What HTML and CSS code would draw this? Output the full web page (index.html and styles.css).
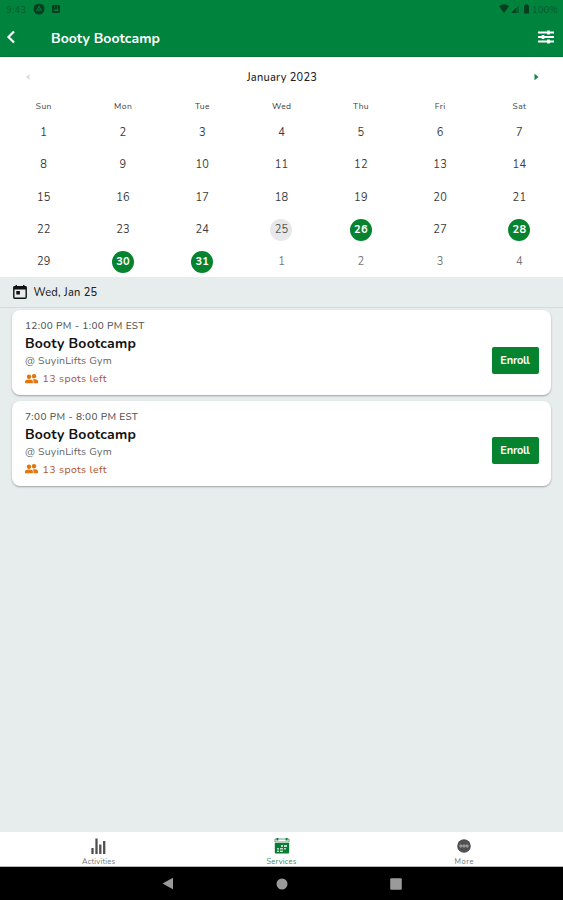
FILE: index.html
```
<!DOCTYPE html>
<html lang="en">
<head>
<meta charset="utf-8">
<title>Booty Bootcamp</title>
<link rel="stylesheet" href="styles.css">
</head>
<body>
<div class="app">
  <header class="top">
    <div class="status">
      <span class="clock">9:43</span>
      <svg class="status-app" width="12" height="12" viewBox="0 0 12 12"><circle cx="6" cy="6" r="5.5"/><path d="M3.500 8 6 3.300 8.500 8M4.800 7h2.400" fill="none" stroke="#00843d" stroke-width="1"/></svg>
      <svg class="status-pic" width="8" height="8" viewBox="0 0 8 8"><rect width="8" height="8" rx="1"/><path d="M1.500 6 3 4l1 1 1.500-2 1 3zM2 1.500h1v1H2zM5 1.500h1v1H5z" fill="#00843d"/></svg>
      <span class="grow"></span>
      <svg width="33" height="10" viewBox="0 0 33 10"><path d="M0 2.200Q5-1.500 10 2.200L5 9z"/><path d="M12 9l8-8v8z" opacity=".45"/><path d="M12 9l5-5v5z"/><path d="M25 1.500h1V.5h3v1h1V9.500h-5z"/></svg>
      <span class="battery">100%</span>
    </div>
    <div class="bar">
      <svg width="10" height="14" viewBox="0 0 10 14"><path d="M8 1.500 2.500 7 8 12.500" fill="none" stroke="#fff" stroke-width="2.200"/></svg>
      <h1>Booty Bootcamp</h1>
      <svg width="16" height="14" viewBox="0 0 16 14" stroke="#fff" stroke-width="1.800"><path d="M0 2.500h16M0 7h16M0 11.500h16"/><path d="M10.500 .5v4M5 5v4M10.500 9.500v4" stroke-width="2.600"/></svg>
    </div>
  </header>

  <section class="calendar">
    <div class="month">
      <svg width="5" height="8" viewBox="0 0 5 8"><path d="M4.500 1v6L.8 4z" fill="#dce0e0"/></svg>
      <span>January 2023</span>
      <svg width="5" height="8" viewBox="0 0 5 8"><path d="M.5.800v6.400L4.500 4z" fill="#128344"/></svg>
    </div>
    <div class="week names"><span>Sun</span><span>Mon</span><span>Tue</span><span>Wed</span><span>Thu</span><span>Fri</span><span>Sat</span></div>
    <div class="week"><span>1</span><span>2</span><span>3</span><span>4</span><span>5</span><span>6</span><span>7</span></div>
    <div class="week"><span>8</span><span>9</span><span>10</span><span>11</span><span>12</span><span>13</span><span>14</span></div>
    <div class="week"><span>15</span><span>16</span><span>17</span><span>18</span><span>19</span><span>20</span><span>21</span></div>
    <div class="week"><span>22</span><span>23</span><span>24</span><span class="today">25</span><span class="open">26</span><span>27</span><span class="open">28</span></div>
    <div class="week"><span>29</span><span class="open">30</span><span class="open">31</span><span class="next">1</span><span class="next">2</span><span class="next">3</span><span class="next">4</span></div>
  </section>

  <div class="date">
    <svg width="14" height="14" viewBox="0 0 14 14"><rect x=".8" y="1.800" width="12.400" height="11.400" rx="1" fill="none" stroke="#111" stroke-width="1.400"/><path d="M.5 1.500h13v3H.5zM2.500 0H4v2H2.500zM10 0h1.500v2H10zM3.300 6h3.600v3.600H3.300z" fill="#111"/></svg>
    <span>Wed, Jan 25</span>
  </div>

  <main class="list">
    <article class="card">
      <div>
        <p class="time">12:00 PM - 1:00 PM EST</p>
        <h2>Booty Bootcamp</h2>
        <p class="place">@ SuyinLifts Gym</p>
        <p class="spots"><svg width="13" height="10" viewBox="0 0 13 10"><circle cx="4" cy="2.700" r="2.200"/><circle cx="9" cy="2.300" r="2.200"/><path d="M0 9.300V7.500Q0 5.500 4 5.500T7.900 7.500v1.800zM8.500 9.300V7.200q0-1-1-1.700Q13 4.600 13 7.500v1.800z"/></svg><span>13 spots left</span></p>
      </div>
      <button>Enroll</button>
    </article>
    <article class="card">
      <div>
        <p class="time">7:00 PM - 8:00 PM EST</p>
        <h2>Booty Bootcamp</h2>
        <p class="place">@ SuyinLifts Gym</p>
        <p class="spots"><svg width="13" height="10" viewBox="0 0 13 10"><circle cx="4" cy="2.700" r="2.200"/><circle cx="9" cy="2.300" r="2.200"/><path d="M0 9.300V7.500Q0 5.500 4 5.500T7.900 7.500v1.800zM8.500 9.300V7.200q0-1-1-1.700Q13 4.600 13 7.500v1.800z"/></svg><span>13 spots left</span></p>
      </div>
      <button>Enroll</button>
    </article>
  </main>

  <nav class="tabs">
    <a><svg width="15" height="16" viewBox="0 0 15 16"><path d="M1.500 16v-6M5.500 16V.5M9.300 16V6.500M13.200 16V3" stroke="#505050" stroke-width="2.300"/></svg><span>Activities</span></a>
    <a class="active"><svg width="16" height="16" viewBox="0 0 16 16"><path d="M1 1h14v3H1z" fill="#fff" stroke="#43875b" stroke-width=".8"/><path d="M.8 5h14.400v9.500q0 1-1 1H1.800q-1 0-1-1zM2.500 0h1.800v2.500H2.500zM11.700 0h1.800v2.500h-1.800z" fill="#087b35"/><path d="M7 7h2v2H7zM10 7h3v2h-3zM3 10h2v1.500H3zM6 10h3v1.500H6zM10 10h2v1.500h-2zM3 12.500h2V14H3zM6 12.500h3V14H6z" fill="#b9dec5"/></svg><span>Services</span></a>
    <a><svg width="14" height="16" viewBox="0 0 14 16"><circle cx="7" cy="8" r="6.800" fill="#505050"/><g fill="#777" stroke="#bbb" stroke-width=".7"><circle cx="3.900" cy="8" r="1.200"/><circle cx="7" cy="8" r="1.200"/><circle cx="10.100" cy="8" r="1.200"/></g></svg><span>More</span></a>
  </nav>
  <div class="system">
    <svg width="12" height="13" viewBox="0 0 12 13"><path d="M11 .8v11.400L.5 6.500z"/></svg>
    <svg width="12" height="12" viewBox="0 0 12 12"><circle cx="6" cy="6" r="5.500"/></svg>
    <svg width="12" height="12" viewBox="0 0 12 12"><rect x=".2" y=".2" width="11.600" height="11.600" rx="1"/></svg>
  </div>
</div>
</body>
</html>
```
FILE: styles.css
```
* { box-sizing: border-box; }
body { margin: 0; font-family: Nunito, "Open Sans", sans-serif; color: #222; }
h1, h2, p { margin: 0; }
svg { display: block; flex: none; }
.app { width: 563px; height: 900px; display: flex; flex-direction: column; background: #e7eded; }

.top { height: 57px; background: #00843d; border-bottom: 1px solid #067332; }
.status { height: 18px; display: flex; align-items: center; padding: 0 6px; font-size: 9.500px; color: #075b2c; fill: #063e20; }
.clock { width: 27px; letter-spacing: .2px; }
.status-pic { margin-left: 7px; }
.grow { flex: 1; }
.battery { width: 25px; white-space: nowrap; }
.bar { height: 39px; display: flex; align-items: center; padding: 0 9px 1px 6px; }
h1 { flex: 1; margin-left: 35px; padding-top: 3px; font-size: 14px; line-height: 20px; font-weight: 700; color: #fff; letter-spacing: .05px; }

.calendar { height: 220px; background: #fff; padding: 10px 4px 0; }
.month { height: 20px; display: flex; align-items: center; justify-content: space-between; padding: 0 20px 0 21px; font-size: 11px; font-weight: 500; letter-spacing: .25px; }
.week { height: 32.400px; display: grid; grid-template-columns: repeat(7, 1fr); align-items: center; justify-items: center; font-size: 11px; letter-spacing: .3px; color: #3c3c3c; }
.week span { width: 22px; height: 22px; line-height: 22px; padding-left: .3px; text-align: center; border-radius: 50%; }
.week.names { height: 29.600px; padding-top: 8px; font-size: 8.500px; letter-spacing: .4px; }
.week.names span { width: auto; padding-left: .4px; }
.week .next { color: #777; }
.week .today { background: #e6e8e9; color: #555; }
.week .open { background: #06832f; color: #fff; font-weight: 700; }

.date { height: 31px; display: flex; align-items: center; gap: 6.500px; padding: 0 13px; font-size: 11px; font-weight: 500; letter-spacing: .25px; border-bottom: 1px solid #d5dadb; }
.list { flex: 1; padding: 2px 12px; }
.card { height: 85px; margin-bottom: 5.500px; display: flex; justify-content: space-between; align-items: flex-start; padding: 8px 12.500px 0 13px; background: #fff; border-radius: 8px; box-shadow: 0 1px 2px #9ba2a5; }
.time { font-size: 10px; line-height: 17px; color: #555; font-weight: 500; letter-spacing: .36px; }
h2 { font-size: 14px; line-height: 18px; font-weight: 700; color: #111; letter-spacing: .2px; }
.place { font-size: 10.500px; line-height: 16px; color: #666; letter-spacing: .2px; }
.spots { display: flex; align-items: center; gap: 4.500px; font-size: 10.500px; line-height: 19px; color: #af5127; fill: #df7813; letter-spacing: .38px; }
button { width: 47px; height: 27px; margin-top: 28.500px; padding: 0; border: 0; border-radius: 2px; background: #06832f; color: #fff; font: 700 11px/27px Nunito, "Open Sans", sans-serif; letter-spacing: -.2px; }

.tabs { height: 35px; display: grid; grid-template-columns: 190.500px 182px 1fr; background: #fff; border-bottom: 1px solid #bbb; }
.tabs a { display: flex; flex-direction: column; align-items: center; padding-top: 6px; font-size: 7.500px; line-height: 15px; letter-spacing: .25px; color: #777; }
.tabs a:first-child { padding-left: 7px; }
.tabs a:last-child { padding-right: 8px; }
.tabs a:last-child span { letter-spacing: .6px; padding-left: 1px; }
.tabs .active { color: #408a5d; }
.system { height: 33px; display: flex; justify-content: center; align-items: center; gap: 102px; background: #000; fill: #9a9a9a; }
```
